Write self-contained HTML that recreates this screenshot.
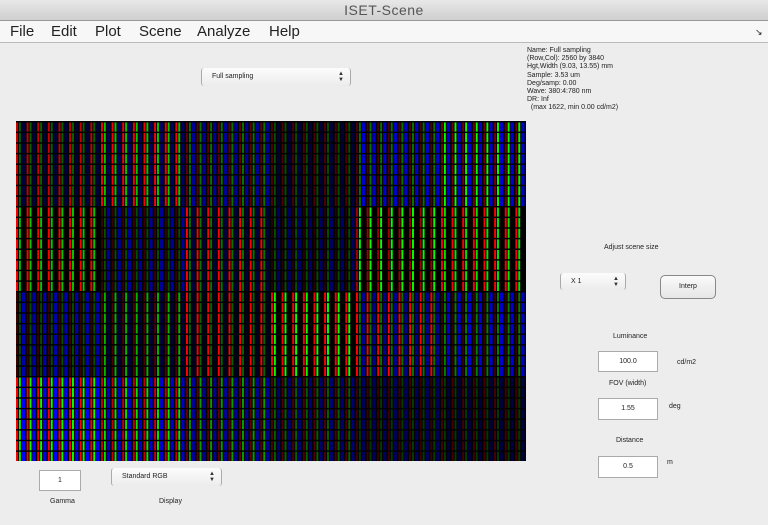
<!DOCTYPE html>
<html><head><meta charset="utf-8"><style>
*{margin:0;padding:0;box-sizing:border-box}
body{width:768px;height:525px;background:#ededed;font-family:"Liberation Sans",sans-serif;position:relative;overflow:hidden;color:#222}
.a{position:absolute}
#title{left:0;top:0;width:768px;height:21px;background:linear-gradient(#e8e8e8,#cfcfcf);border-bottom:1px solid #999;text-align:center;font-size:14px;line-height:21px;color:#555;letter-spacing:0.5px}
#menu{left:0;top:21px;width:768px;height:22px;background:#f7f7f7;border-bottom:1px solid #bbb;font-size:15px;line-height:22px}
#menu span{position:absolute;top:0}
.s{font-size:7px;color:#222}
.pop{background:linear-gradient(#fcfcfc,#ececec);border-left:1px solid #aaa;border-right:1px solid #aaa;border-radius:3px;font-size:7px;line-height:18px;padding-left:10px}
.pop i{position:absolute;right:6px;top:3px;font-style:normal;font-size:6px;line-height:6px;color:#333}
.box{background:#fff;border:1px solid #aaa;font-size:7px;text-align:center}
#img{left:16px;top:121px;width:510px;height:340px;background:#000}
.b{position:absolute;width:85px;height:85px}
</style></head><body>
<div id="title" class="a">ISET-Scene</div>
<div id="menu" class="a"><span style="left:10px">File</span><span style="left:51px">Edit</span><span style="left:95px">Plot</span><span style="left:139px">Scene</span><span style="left:197px">Analyze</span><span style="left:269px">Help</span><span style="left:755px;font-size:9px">↘</span></div>
<div class="a s" style="left:527px;top:47px;line-height:8.2px">Name: Full sampling<br>(Row,Col): 2560 by 3840<br>Hgt,Width (9.03, 13.55) mm<br>Sample: 3.53 um<br>Deg/samp: 0.00<br>Wave: 380:4:780 nm<br>DR: Inf<br>&nbsp;&nbsp;(max 1622, min 0.00 cd/m2)</div>
<div class="a pop" style="left:201px;top:68px;width:150px;height:18px">Full sampling<i>▲<br>▼</i></div>
<div id="img" class="a"></div>
<div class="a s" style="left:604px;top:244px">Adjust scene size</div>
<div class="a pop" style="left:560px;top:273px;width:66px;height:17px;line-height:17px">X 1<i>▲<br>▼</i></div>
<div class="a" style="left:660px;top:275px;width:56px;height:24px;border:1px solid #888;border-radius:5px;background:linear-gradient(#fafafa,#e6e6e6);font-size:7px;text-align:center;line-height:22px">Interp</div>
<div class="a s" style="left:613px;top:333px">Luminance</div>
<div class="a box" style="left:598px;top:351px;width:60px;height:21px;line-height:19px">100.0</div>
<div class="a s" style="left:677px;top:359px">cd/m2</div>
<div class="a s" style="left:609px;top:380px">FOV (width)</div>
<div class="a box" style="left:598px;top:398px;width:60px;height:22px;line-height:20px">1.55</div>
<div class="a s" style="left:669px;top:403px">deg</div>
<div class="a s" style="left:616px;top:437px">Distance</div>
<div class="a box" style="left:598px;top:456px;width:60px;height:22px;line-height:20px">0.5</div>
<div class="a s" style="left:667px;top:459px">m</div>
<div class="a box" style="left:39px;top:470px;width:42px;height:21px;line-height:19px">1</div>
<div class="a s" style="left:50px;top:498px">Gamma</div>
<div class="a pop" style="left:111px;top:468px;width:111px;height:18px">Standard RGB<i>▲<br>▼</i></div>
<div class="a s" style="left:159px;top:498px">Display</div>
<script>
var C=[
[[200,100,60],[255,200,100],[100,120,150],[80,80,60],[80,120,200],[120,255,200]],
[[255,200,0],[60,80,150],[255,120,60],[40,80,100],[160,255,0],[255,230,0]],
[[60,80,170],[80,180,60],[255,100,30],[255,255,0],[255,120,140],[60,130,200]],
[[255,255,255],[200,230,200],[100,160,150],[80,100,110],[60,60,90],[70,60,60]]];
var img=document.getElementById('img'),h='';
for(var r=0;r<4;r++)for(var c=0;c<6;c++){var k=C[r][c];
var R='rgb('+k[0]+',0,0)',G='rgb(0,'+k[1]+',0)',B='rgb(0,0,'+k[2]+')';
h+='<div class="b" style="left:'+(c*85)+'px;top:'+(r*85)+'px;background:linear-gradient(#000 0,#000 1.5px,transparent 1.5px) 0 0/10.625px 10.625px,linear-gradient(90deg,'+R+' 0,'+R+' 2px,#000 2px,#000 3px,'+G+' 3px,'+G+' 5px,#000 5px,#000 6px,'+B+' 6px,'+B+' 9px,#000 9px) 0 0/10.625px 10.625px"></div>';}
img.innerHTML=h;
</script>
</body></html>
